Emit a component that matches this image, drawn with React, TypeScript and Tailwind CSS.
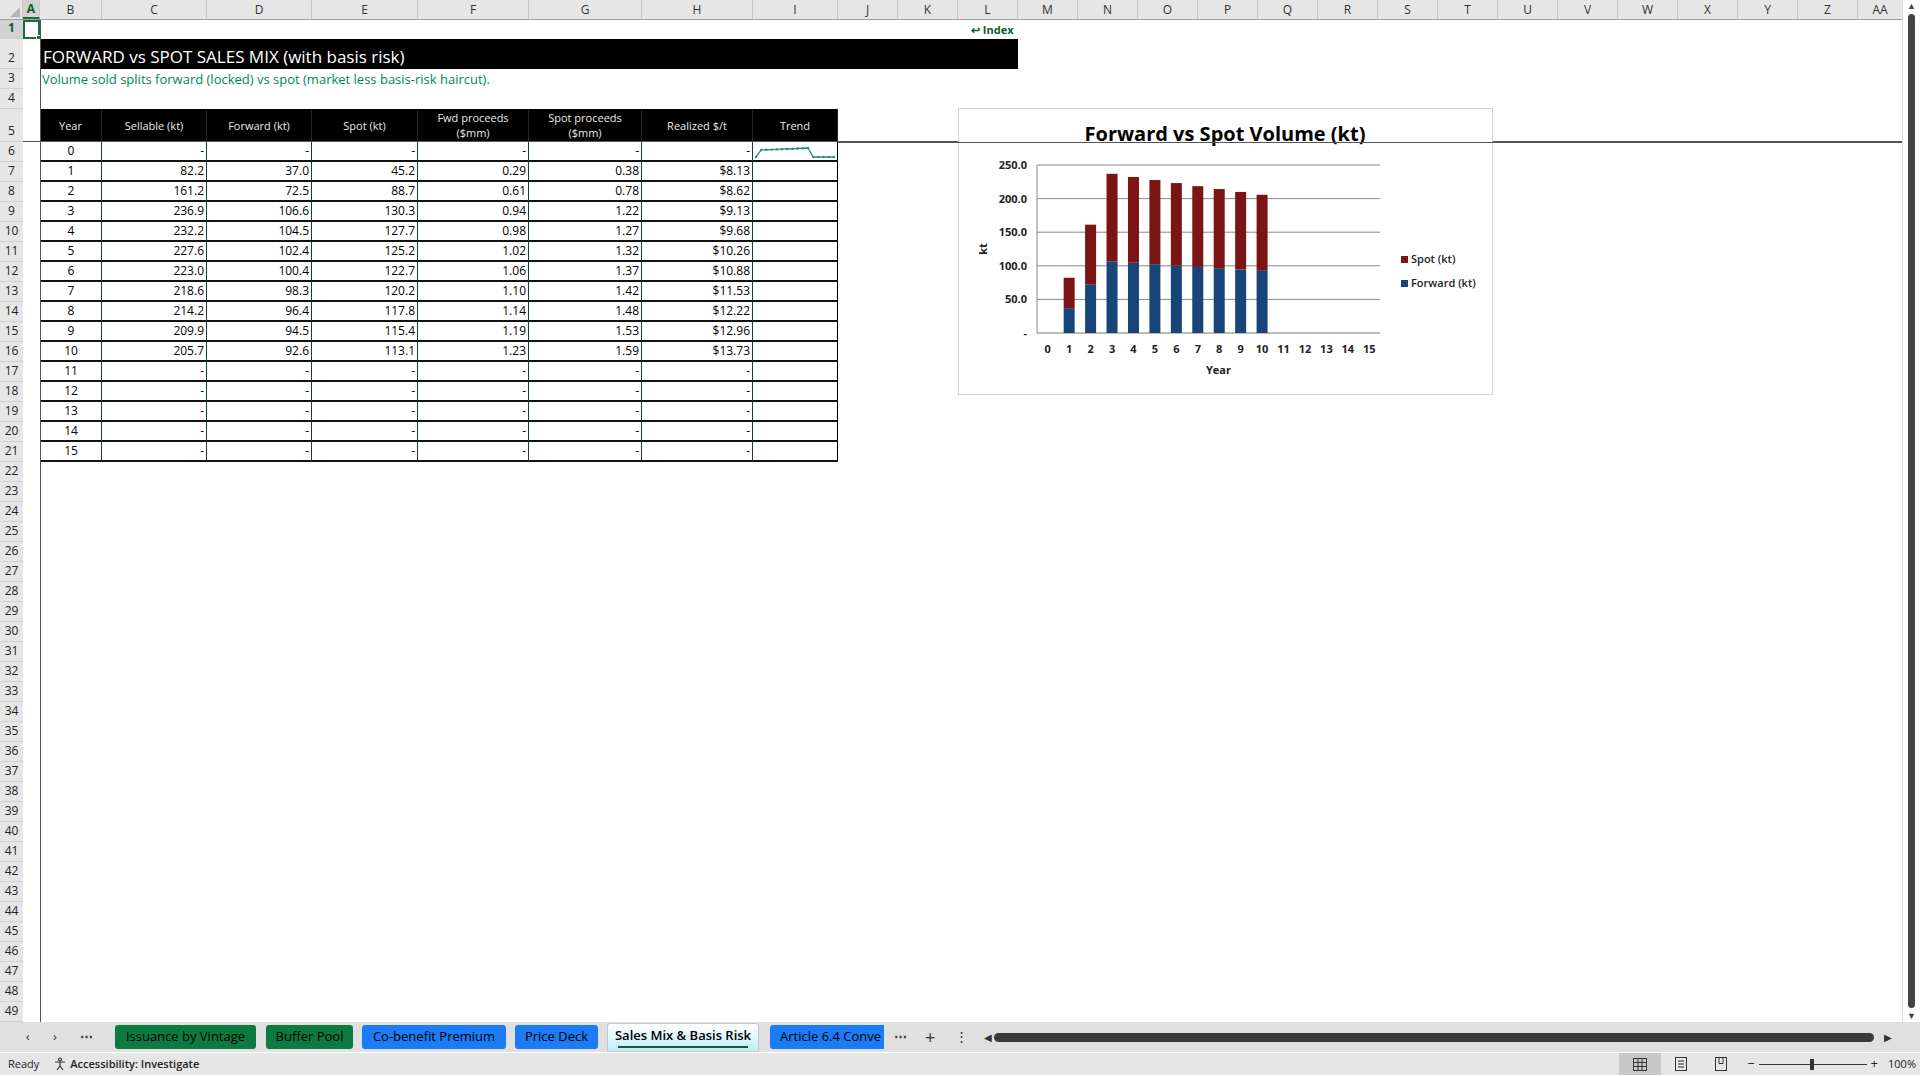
import React from "react";

const colW = ["w-[17px]", "w-[62px]", "w-[105px]", "w-[105px]", "w-[106px]", "w-[111px]", "w-[113px]", "w-[111px]", "w-[85px]"];
const letters = ["A", "B", "C", "D", "E", "F", "G", "H", "I", "J", "K", "L", "M", "N", "O", "P", "Q", "R", "S", "T", "U", "V", "W", "X", "Y", "Z"];
const tblW = ["w-[62px]", "w-[105px]", "w-[105px]", "w-[106px]", "w-[111px]", "w-[113px]", "w-[111px]", "w-[85px]"];

const data: string[][] = [
  ["0", "-", "-", "-", "-", "-", "-"],
  ["1", "82.2", "37.0", "45.2", "0.29", "0.38", "$8.13"],
  ["2", "161.2", "72.5", "88.7", "0.61", "0.78", "$8.62"],
  ["3", "236.9", "106.6", "130.3", "0.94", "1.22", "$9.13"],
  ["4", "232.2", "104.5", "127.7", "0.98", "1.27", "$9.68"],
  ["5", "227.6", "102.4", "125.2", "1.02", "1.32", "$10.26"],
  ["6", "223.0", "100.4", "122.7", "1.06", "1.37", "$10.88"],
  ["7", "218.6", "98.3", "120.2", "1.10", "1.42", "$11.53"],
  ["8", "214.2", "96.4", "117.8", "1.14", "1.48", "$12.22"],
  ["9", "209.9", "94.5", "115.4", "1.19", "1.53", "$12.96"],
  ["10", "205.7", "92.6", "113.1", "1.23", "1.59", "$13.73"],
  ["11", "-", "-", "-", "-", "-", "-"],
  ["12", "-", "-", "-", "-", "-", "-"],
  ["13", "-", "-", "-", "-", "-", "-"],
  ["14", "-", "-", "-", "-", "-", "-"],
  ["15", "-", "-", "-", "-", "-", "-"],
];
const fwd = [0, 37, 72.5, 106.6, 104.5, 102.4, 100.4, 98.3, 96.4, 94.5, 92.6];
const spot = [0, 45.2, 88.7, 130.3, 127.7, 125.2, 122.7, 120.2, 117.8, 115.4, 113.1];
const realized = [0, 8.13, 8.62, 9.13, 9.68, 10.26, 10.88, 11.53, 12.22, 12.96, 13.73, 0, 0, 0, 0, 0];

function RowNum({ n, h, active }: { n: number; h: string; active?: boolean }) {
  return (
    <div className={`w-[23px] shrink-0 ${h} flex items-end justify-center pb-[1px] text-[12px] border-b border-[#d0d0d0] ${active ? "bg-[#d2d2d2] text-[#0e5c2f] font-bold" : "bg-[#e6e6e6] text-[#222]"}`}>
      {n}
    </div>
  );
}

function Spark() {
  const pts = realized.map((v, i) => {
    const x = 3 + i * 5.2;
    const y = v === 0 ? 15 : 8 - (v - 8) * 0.35;
    return [x, y];
  });
  return (
    <svg width="85" height="20" className="block">
      <polyline points={pts.map((p) => p.join(",")).join(" ")} fill="none" stroke="#2a8a8a" strokeWidth="1.3" />
      {pts.map((p, i) => (
        <circle key={i} cx={p[0]} cy={p[1]} r="1.2" fill="#2a8a8a" />
      ))}
    </svg>
  );
}

function Chart() {
  const px0 = 78, px1 = 421, py0 = 56, py1 = 224;
  const cw = (px1 - px0) / 16;
  const sc = (py1 - py0) / 250;
  const yl = ["250.0", "200.0", "150.0", "100.0", "50.0", "-"];
  return (
    <div className="absolute left-[958px] top-[108px] w-[535px] h-[287px] bg-white border border-[#d4d4d4]">
      <svg width="533" height="285" className="block" style={{ fontFamily: "'Open Sans', 'Liberation Sans', sans-serif" }}>
        <text x="266" y="32" textAnchor="middle" fontSize="20" fontWeight="700" fill="#000">Forward vs Spot Volume (kt)</text>
        {yl.map((l, i) => {
          const y = py0 + i * 50 * sc;
          return (
            <g key={i}>
              <line x1={px0} x2={px1} y1={y} y2={y} stroke={i === 5 ? "#777" : "#888"} strokeWidth="1" />
              <text x={px0 - 10} y={y + 4} textAnchor="end" fontSize="11" fontWeight="700" fill="#222">{l}</text>
            </g>
          );
        })}
        <line x1={px0} x2={px0} y1={py0} y2={py1} stroke="#888" />
        {Array.from({ length: 16 }).map((_, i) => {
          const cx = px0 + cw * i + cw / 2;
          return (
            <g key={i}>
              <text x={cx} y={py1 + 20} textAnchor="middle" fontSize="11" fontWeight="700" fill="#222">{i}</text>
              {i < 11 && fwd[i] > 0 && (
                <>
                  <rect x={cx - 5.5} y={py1 - fwd[i] * sc} width="11" height={fwd[i] * sc} fill="#17457a" />
                  <rect x={cx - 5.5} y={py1 - (fwd[i] + spot[i]) * sc} width="11" height={spot[i] * sc} fill="#7b1414" />
                </>
              )}
            </g>
          );
        })}
        <text x={(px0 + px1) / 2 + 10} y={py1 + 41} textAnchor="middle" fontSize="11" fontWeight="700" fill="#222">Year</text>
        <text x="28" y="140" textAnchor="middle" fontSize="11" fontWeight="700" fill="#222" transform="rotate(-90 28 140)">kt</text>
        <rect x="442" y="147" width="7" height="7" fill="#7b1414" />
        <text x="452" y="154" fontSize="11" fill="#222" fontWeight="600">Spot (kt)</text>
        <rect x="442" y="171" width="7" height="7" fill="#17457a" />
        <text x="452" y="178" fontSize="11" fill="#222" fontWeight="600">Forward (kt)</text>
      </svg>
    </div>
  );
}

export default function App() {
  const font = { fontFamily: "'Open Sans', 'Liberation Sans', Arial, sans-serif" };
  const rows: number[] = [];
  for (let i = 22; i <= 49; i++) rows.push(i);
  return (
    <div className="w-[1920px] h-[1076px] overflow-hidden bg-white flex flex-col" style={font}>
      <div className="h-[1022px] flex relative">
        <div className="flex-1 flex flex-col relative">
          {/* column header */}
          <div className="h-[20px] flex bg-[#e6e6e6] border-b border-[#a0a0a0] text-[12px] text-[#333]">
            <div className="w-[23px] shrink-0 flex items-end justify-end pr-[2px] pb-[2px] border-r border-[#c8c8c8]">
              <div className="w-0 h-0 border-l-[10px] border-l-transparent border-b-[10px] border-b-[#b4b4b4]" />
            </div>
            {letters.map((l, i) => (
              <div key={l} className={`${i < 9 ? colW[i] : "w-[60px]"} shrink-0 flex items-center justify-center border-r border-[#c8c8c8] ${i === 0 ? "bg-[#d2d2d2] text-[#0e5c2f] font-bold border-b-2 border-b-[#1e6b3c]" : ""}`}>{l}</div>
            ))}
            <div className="flex-1 flex items-center justify-center">AA</div>
          </div>
          {/* row 1 */}
          <div className="flex h-[19px]">
            <RowNum n={1} h="h-[19px]" active />
            <div className="w-[17px] h-[19px] border-2 border-[#1e6b3c] relative">
              <div className="absolute -right-[3px] -bottom-[3px] w-[5px] h-[5px] bg-[#1e6b3c] border border-white" />
            </div>
            <div className="flex-1 relative">
              <span className="absolute left-[931px] top-[2px] text-[11px] font-bold text-[#0e5c2f]">↩ Index</span>
            </div>
          </div>
          {/* row 2 */}
          <div className="flex h-[30px]">
            <RowNum n={2} h="h-[30px]" />
            <div className="w-[17px]" />
            <div className="w-[978px] h-[30px] bg-black text-white text-[17px] flex items-center pl-[3px] pt-[5px]">FORWARD vs SPOT SALES MIX (with basis risk)</div>
          </div>
          {/* row 3 */}
          <div className="flex h-[20px]">
            <RowNum n={3} h="h-[20px]" />
            <div className="w-[17px]" />
            <div className="pl-[2px] text-[13px] text-[#00875a] leading-[20px]">Volume sold splits forward (locked) vs spot (market less basis-risk haircut).</div>
          </div>
          <div className="flex h-[20px]">
            <RowNum n={4} h="h-[20px]" />
          </div>
          {/* row 5 header */}
          <div className="flex h-[33px] border-b border-[#555]">
            <RowNum n={5} h="h-[33px]" />
            <div className="w-[17px]" />
            {["Year", "Sellable (kt)", "Forward (kt)", "Spot (kt)", "Fwd proceeds ($mm)", "Spot proceeds ($mm)", "Realized $/t", "Trend"].map((t, i) => (
              <div key={i} className={`${tblW[i]} shrink-0 bg-black text-[#e6ece8] text-[11px] leading-[15px] flex items-center justify-center text-center px-2 border-r border-[#1b2b24]`}>{t}</div>
            ))}
          </div>
          {data.map((r, ri) => (
            <div key={ri} className="flex h-[20px]">
              <RowNum n={ri + 6} h="h-[20px]" />
              <div className="w-[17px]" />
              {r.map((c, ci) => (
                <div key={ci} className={`${tblW[ci]} shrink-0 h-[20px] border-b-2 border-b-[#111] border-r border-r-[#1b3a30] text-[12px] text-black flex items-center ${ci === 0 ? "justify-center border-l border-l-black" : "justify-end pr-[2px]"}`}>{c}</div>
              ))}
              <div className={`${tblW[7]} shrink-0 h-[20px] border-b-2 border-b-[#111] border-r border-r-black`}>{ri === 0 && <Spark />}</div>
            </div>
          ))}
          {rows.map((n) => (
            <div key={n} className="flex h-[20px]">
              <RowNum n={n} h="h-[20px]" />
            </div>
          ))}
          <div className="absolute left-[40px] top-[20px] bottom-0 w-px bg-[#555]" />
          <Chart />
          <div className="absolute left-[838px] right-0 top-[142px] h-px bg-[#555]" />
        </div>
        {/* vertical scrollbar */}
        <div className="w-[18px] bg-white border-l border-[#ddd] flex flex-col items-center">
          <div className="text-[9px] text-[#444] leading-[12px]">▲</div>
          <div className="w-[7px] flex-1 bg-[#444] rounded-full my-[2px]" />
          <div className="text-[9px] text-[#444] leading-[12px]">▼</div>
        </div>
      </div>
      {/* tab bar */}
      <div className="h-[31px] bg-[#e0e0e0] border-b border-white flex items-center text-[13px] text-black">
        <div className="w-[115px] flex items-center justify-around pl-[14px] pr-[10px] text-[#333]">
          <span>‹</span><span>›</span><span className="font-bold">⋯</span>
        </div>
        <div className="w-[141px] h-[24px] bg-[#0d7a3f] rounded-[3px] flex items-center justify-center">Issuance by Vintage</div>
        <div className="w-[87px] h-[24px] ml-[10px] bg-[#0d7a3f] rounded-[3px] flex items-center justify-center">Buffer Pool</div>
        <div className="w-[144px] h-[24px] ml-[9px] bg-[#1b7cf5] rounded-[3px] flex items-center justify-center">Co-benefit Premium</div>
        <div className="w-[83px] h-[24px] ml-[9px] bg-[#1b7cf5] rounded-[3px] flex items-center justify-center">Price Deck</div>
        <div className="w-[152px] h-[29px] ml-[9px] bg-gradient-to-b from-white to-[#bdeefa] border border-[#c8c8c8] rounded-t-[3px] flex flex-col items-center justify-center font-semibold text-[13px]">
          <span>Sales Mix &amp; Basis Risk</span>
          <div className="w-[130px] h-[2px] bg-[#1a5c3a]" />
        </div>
        <div className="w-[114px] h-[24px] ml-[11px] bg-[#1b7cf5] rounded-l-[3px] flex items-center pl-[10px] overflow-hidden whitespace-nowrap">Article 6.4 Conve</div>
        <span className="ml-[10px] font-bold text-[#333]">⋯</span>
        <span className="ml-[18px] text-[18px] text-[#333]">+</span>
        <span className="ml-[20px] text-[#333]">⋮</span>
        <div className="ml-[16px] w-[908px] flex items-center gap-[2px]">
          <span className="text-[10px] text-[#333]">◀</span>
          <div className="flex-1 h-[9px] bg-[#3a3a3a] rounded-full" />
          <span className="text-[10px] text-[#333] ml-[8px]">▶</span>
        </div>
      </div>
      {/* status bar */}
      <div className="h-[22px] bg-[#e6e6e6] flex items-center text-[11px] text-[#222]">
        <span className="ml-[8px]">Ready</span>
        <span className="ml-[14px] flex items-center gap-[3px] font-semibold">
          <svg width="14" height="14" viewBox="0 0 14 14" fill="none" stroke="#333" strokeWidth="1.2">
            <circle cx="7" cy="2.5" r="1.5" />
            <path d="M2 5h10M7 5v4M7 9l-3 4M7 9l3 4" />
          </svg>
          Accessibility: Investigate
        </span>
        <div className="ml-auto flex items-center h-full">
          <div className="w-[42px] h-full bg-[#c8c8c8] flex items-center justify-center">
            <svg width="14" height="13" viewBox="0 0 14 13" fill="none" stroke="#333"><rect x="0.5" y="0.5" width="13" height="12" /><path d="M0.5 4.5h13M0.5 8.5h13M5 0.5v12M9 0.5v12" /></svg>
          </div>
          <div className="w-[40px] flex justify-center">
            <svg width="12" height="14" viewBox="0 0 12 14" fill="none" stroke="#333"><rect x="0.5" y="0.5" width="11" height="13" /><path d="M3 4h6M3 7h6M3 10h6" /></svg>
          </div>
          <div className="w-[40px] flex justify-center">
            <svg width="12" height="14" viewBox="0 0 12 14" fill="none" stroke="#333"><rect x="0.5" y="0.5" width="11" height="13" /><path d="M4 0.5v6h4v-6" /></svg>
          </div>
          <span className="ml-[6px] text-[13px]">−</span>
          <div className="w-[108px] h-px bg-[#333] mx-[4px] relative">
            <div className="absolute left-[51px] -top-[5px] w-[4px] h-[11px] bg-[#333]" />
          </div>
          <span className="text-[13px]">+</span>
          <span className="ml-[10px] mr-[4px]">100%</span>
        </div>
      </div>
    </div>
  );
}
